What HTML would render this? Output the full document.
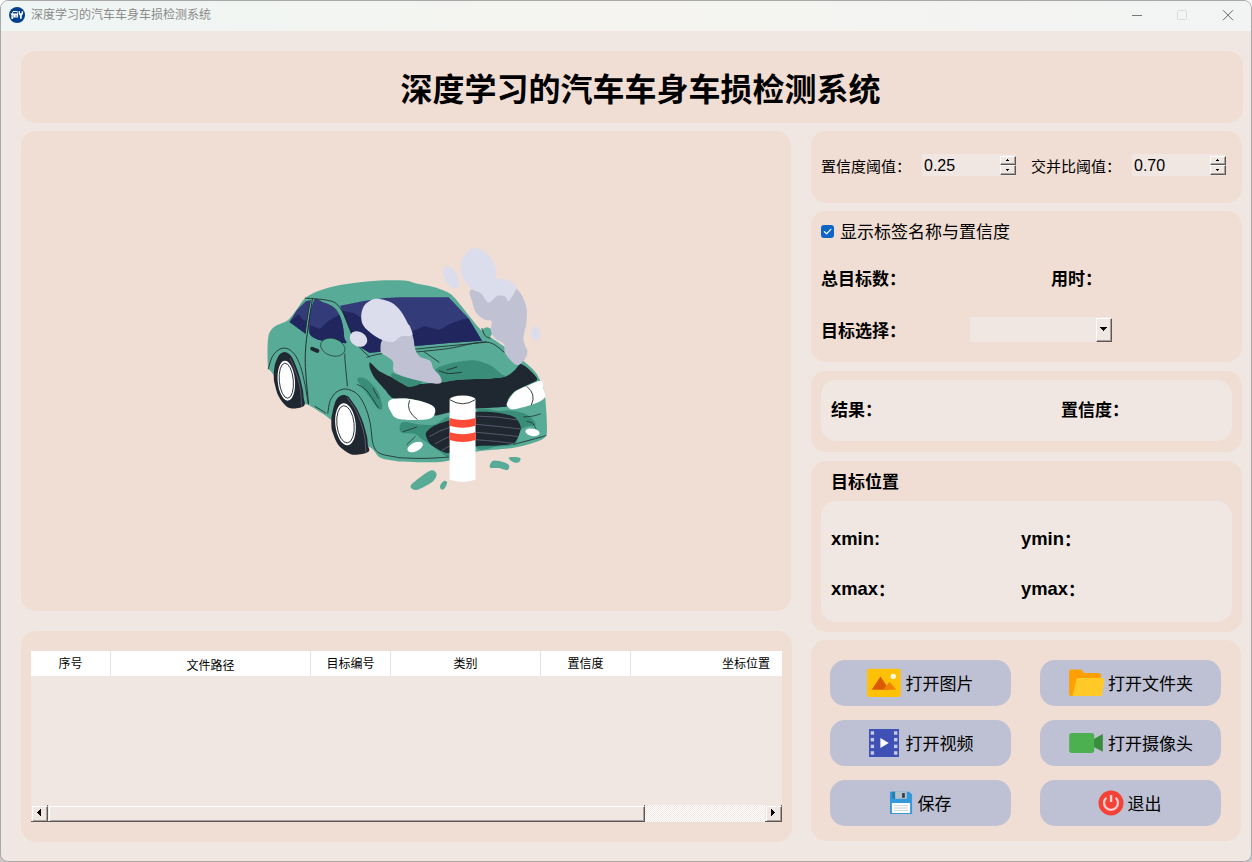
<!DOCTYPE html>
<html lang="zh-CN">
<head>
<meta charset="utf-8">
<title>深度学习的汽车车身车损检测系统</title>
<style>
*{box-sizing:border-box;margin:0;padding:0}
html,body{width:1252px;height:862px;overflow:hidden;background:linear-gradient(#fff 0,#fff 50%,#c8c8c8 50%)}
body{font-family:"Liberation Sans","Noto Sans CJK SC",sans-serif;color:#000;position:relative}
.abs{position:absolute}
#win{position:absolute;left:0;top:0;width:1252px;height:862px;background:#f0e7e2;border:1px solid #a9a9a9;border-radius:8px;overflow:hidden}
#tbar{position:absolute;left:0;top:0;width:1250px;height:30px;background:linear-gradient(90deg,#eef5f4 0%,#f2f5f2 25%,#f5f4f0 48%,#f3f4f2 75%,#f2f4f3 100%)}
#ttl{position:absolute;left:30px;top:0;height:30px;line-height:29px;font-size:12px;color:#8a8a8a;white-space:nowrap}
.panel{position:absolute;background:#f0ddd3;border-radius:15px}
.inner{position:absolute;background:#f0e7e2;border-radius:15px}
.lbl{position:absolute;white-space:nowrap;line-height:1}
.b{font-weight:bold}
.btn{position:absolute;width:181px;height:45.6px;background:#bec1d3;border-radius:15px}
.btn span{position:absolute;font-size:17px;line-height:1;white-space:nowrap}
.btn svg{position:absolute}
.th{position:absolute;top:0;height:25px;background:#fff;font-size:12px;line-height:27px;overflow:hidden;text-align:center;white-space:nowrap}

.spin{width:94px;height:22px;background:#f0e7e2}
.spin span{position:absolute;left:2px;top:4px;font-size:16px;line-height:1;letter-spacing:0}
.spin i,.combo i{position:absolute;border-top:1px solid #fff;border-left:1px solid #fff;border-right:1px solid #5c5855;border-bottom:1px solid #5c5855;background:#f0e7e2;box-shadow:inset -1px -1px 0 #a9a19d}
.spin i{left:78px;width:16px}
.spin i.u{top:2px;height:9px}.spin i.d{top:11px;height:10px}
.spin i b,.combo i b{position:absolute;background:#000;height:1px}
.combo{width:142px;height:25px;background:#f0e7e2}
.combo i{left:126px;top:1px;width:16px;height:24px}
.sb{position:absolute}
.sb i{position:absolute;border-top:1px solid #fff;border-left:1px solid #fff;border-right:1px solid #5c5855;border-bottom:1px solid #5c5855;background:#f0e7e2;box-shadow:inset -1px -1px 0 #a9a19d}
.sb b{position:absolute;background:#000}
.sb u{position:absolute;width:1px;height:1px;background:#5c5855}
.trk{position:absolute;background:repeating-conic-gradient(#fff 0 25%,#f0e7e2 0 50%);background-size:2px 2px}
.lt{font-size:18.4px}
.fc{position:relative;top:0.5px}
</style>
</head>
<body>
<div id="win">
  <div id="tbar"></div>
  <div id="ttl">深度学习的汽车车身车损检测系统</div>


  <svg class="abs" style="left:7px;top:5px" width="20" height="20" viewBox="7 5 20 20">
    <circle cx="16.05" cy="14" r="8.5" fill="#fff" opacity=".55"/>
    <circle cx="16.05" cy="14" r="8" fill="#003f8e"/>
    <g fill="#fff">
      <path d="M12.1 10.1 H16.3 L17.1 12.8 V16.5 H12.1 V17.9 H10.4 V13.4 L9.5 13 L9.8 12.3 L10.7 12.6Z"/>
      <path d="M17.5 10.4 L18.9 10.0 L19.1 12 Q19.85 12.8 20.6 12 L20.8 10.0 L22.2 10.4 Q22.5 13.2 20.75 14.6 L20.7 17.4 Q19.85 17.9 19.0 17.4 L18.95 14.6 Q17.2 13.2 17.5 10.4Z"/>
    </g>
    <path d="M12.3 10.95 H16.1 L16.5 12.5 H11.8Z" fill="#003f8e"/>
    <rect x="11.5" y="14.5" width="1.4" height="1.1" fill="#5a7db5"/><rect x="14.3" y="14.5" width="1.9" height="1.1" fill="#5a7db5"/>
  </svg>
  <div class="abs" style="left:1131px;top:14px;width:10px;height:1px;background:#787878"></div>
  <div class="abs" style="left:1176px;top:9px;width:10px;height:10px;border:1px solid #dadbda;border-radius:1.5px"></div>
  <svg class="abs" style="left:1220px;top:8px" width="14" height="14" viewBox="0 0 14 14"><path d="M2 1.2 L12 11.2 M12 1.2 L2 11.2" stroke="#686868" stroke-width="1" fill="none"/></svg>

  <!-- header -->
  <div class="panel" style="left:20px;top:50px;width:1221.5px;height:71.5px"></div>
  <div class="lbl b" id="h1" style="left:399.5px;top:72.5px;font-size:32px">深度学习的汽车车身车损检测系统</div>

  <!-- image panel -->
  <div class="panel" id="imgp" style="left:20px;top:130px;width:770px;height:480px"></div>

  <!--CAR--><svg class="abs" id="car" style="left:239px;top:229px" width="340" height="280" viewBox="240 230 340 280">
<ellipse cx="406" cy="424" rx="148" ry="70" fill="none" stroke="#fff" stroke-opacity=".12" stroke-width=".8" transform="rotate(4 406 424)"/>
<path d="M305.2 298.1 C308.7 295.1 313.3 293.1 318.2 291.1 C323.1 289.2 328.5 287.6 334.4 286.3 C340.4 284.9 346.3 284.0 353.9 283.0 C361.5 282.1 371.5 281.0 379.9 280.6 C388.3 280.2 398.2 280.1 404.2 280.6 C410.3 281.1 411.5 282.5 416.2 283.5 C420.9 284.5 427.3 285.4 432.5 286.8 C437.6 288.2 443.3 290.0 447.1 292.0 C450.9 293.9 451.7 294.7 455.2 298.5 C458.7 302.2 464.1 309.7 468.2 314.7 C472.3 319.7 475.8 324.7 479.6 328.5 C483.3 332.3 486.9 334.4 490.9 337.4 C495.0 340.4 498.5 342.4 503.9 346.3 C509.3 350.3 518.3 356.8 523.4 361.0 C528.5 365.2 532.0 368.3 534.8 371.5 C537.5 374.7 538.4 376.7 540.0 380.0 C541.5 383.2 543.2 386.1 544.2 390.8 C545.2 395.6 545.7 402.5 546.1 408.7 C546.6 414.9 547.0 423.6 546.9 428.2 C546.9 432.8 547.1 434.1 545.6 436.3 C544.2 438.5 543.3 439.3 538.0 441.2 C532.7 443.1 523.9 445.9 513.7 447.7 C503.4 449.4 487.1 449.6 476.3 451.7 C465.5 453.9 457.4 458.9 448.7 460.7 C440.0 462.4 432.5 462.2 424.4 462.3 C416.2 462.4 404.7 461.7 400.0 461.5 C395.3 461.3 399.5 461.7 396.1 461.0 C392.8 460.3 384.1 459.6 379.9 457.4 C375.7 455.2 376.1 451.5 370.9 447.8 C365.7 444.1 356.1 440.3 349.0 435.2 C341.8 430.1 334.6 422.3 327.8 417.2 C321.0 412.1 312.0 406.9 308.2 404.7 C304.5 402.5 308.8 405.6 305.1 403.9 C301.5 402.2 291.9 399.7 286.3 394.5 C280.8 389.3 274.9 376.9 271.9 372.6 C268.9 368.3 269.0 371.8 268.3 368.7 C267.6 365.5 267.6 358.9 267.5 353.7 C267.5 348.4 267.6 341.3 268.2 337.4 C268.8 333.5 269.7 332.1 271.1 330.1 C272.5 328.1 273.9 326.9 276.8 325.2 C279.6 323.5 284.8 322.6 288.2 319.9 C291.5 317.2 294.2 312.6 297.1 309.0 C299.9 305.4 301.7 301.1 305.2 298.1Z" fill="#57ab97" />
<path d="M284.4 351.9 C282.9 351.9 281.3 352.9 280.1 354.1 C278.8 355.3 277.8 357.2 276.9 359.3 C276.0 361.3 275.1 363.6 274.6 366.3 C274.1 369.1 273.8 372.8 273.8 375.7 C273.8 378.6 273.8 380.2 274.6 383.6 C275.4 386.9 276.5 392.3 278.5 396.1 C280.5 399.9 283.7 404.2 286.3 406.3 C288.9 408.3 291.2 408.7 294.2 408.6 C297.2 408.5 302.8 407.3 304.3 405.5 C305.9 403.7 303.8 400.3 303.6 397.6 C303.3 395.0 303.6 393.7 302.8 389.8 C302.0 385.9 300.4 379.1 298.9 374.2 C297.3 369.2 295.0 363.4 293.4 360.1 C291.8 356.7 290.6 355.5 289.1 354.1 C287.7 352.7 286.0 351.9 284.4 351.9Z" fill="#1f2730" />
<path d="M343.0 395.0 C341.5 395.2 339.4 396.2 338.0 397.6 C336.6 399.1 335.6 400.8 334.6 403.9 C333.5 407.0 332.3 412.8 331.7 416.4 C331.2 420.1 331.3 423.2 331.4 425.8 C331.6 428.4 331.4 429.0 332.5 432.1 C333.6 435.2 335.5 441.2 338.0 444.6 C340.5 448.0 344.5 450.8 347.4 452.5 C350.3 454.2 351.7 454.9 355.2 454.8 C358.8 454.7 366.5 453.4 368.5 451.7 C370.6 450.0 368.0 447.1 367.8 444.6 C367.5 442.2 367.8 440.5 367.0 436.8 C366.2 433.1 364.8 427.4 363.1 422.7 C361.4 418.0 358.9 412.6 356.8 408.6 C354.7 404.6 351.8 401.0 350.2 398.9 C348.6 396.8 348.3 396.7 347.1 396.1 C345.9 395.4 344.5 394.7 343.0 395.0Z" fill="#1f2730" />
<path d="M290.2 358.5 C291.3 361.1 294.8 368.9 296.5 374.2 C298.2 379.4 299.6 384.5 300.4 389.8 C301.3 395.1 301.3 403.1 301.5 405.8" fill="none" stroke="#6b6585" stroke-width="0.75" stroke-linecap="round"/>
<path d="M347.4 398.0 C348.7 399.9 352.9 405.1 355.2 409.4 C357.5 413.6 359.6 418.9 361.2 423.5 C362.8 428.1 363.8 432.0 364.6 436.8 C365.4 441.6 365.7 449.6 365.9 452.1" fill="none" stroke="#6b6585" stroke-width="0.75" stroke-linecap="round"/>
<g transform="rotate(-5 286.3 380.7)"><ellipse cx="286.3" cy="380.7" rx="8.6" ry="20" fill="#fff"/><ellipse cx="286.3" cy="380.7" rx="7.0" ry="17.6" fill="none" stroke="#1f2730" stroke-width="0.9"/></g>
<g transform="rotate(-6 345.5 424.3)"><ellipse cx="345.5" cy="424.3" rx="10.2" ry="21.1" fill="#fff"/><ellipse cx="345.5" cy="424.3" rx="8.6" ry="18.700000000000003" fill="none" stroke="#1f2730" stroke-width="0.9"/></g>
<path d="M306.0 300.9 L310.4 300.4 L305.2 333.4 L289.5 322.0 L297.1 309.8Z" fill="#343b79" />
<path d="M289.5 322.0 L298.7 313.9 L302.8 319.6 L306.8 321.2 L305.2 333.4Z" fill="#21275e" />
<clipPath id="csw"><path d="M313.6 300.9 C315.9 295.5 320.7 301.6 323.9 302.5 C327.1 303.5 330.4 304.8 332.8 306.6 C335.2 308.3 336.9 310.1 338.5 313.1 C340.1 316.0 341.6 320.4 342.5 324.4 C343.5 328.5 344.0 334.3 344.2 337.4 C344.4 340.5 349.5 343.5 343.8 343.1 C338.2 342.7 315.4 342.0 310.4 335.0 C305.4 327.9 311.4 306.3 313.6 300.9Z" fill="#000" /></clipPath>
<path d="M313.6 300.9 C315.9 295.5 320.7 301.6 323.9 302.5 C327.1 303.5 330.4 304.8 332.8 306.6 C335.2 308.3 336.9 310.1 338.5 313.1 C340.1 316.0 341.6 320.4 342.5 324.4 C343.5 328.5 344.0 334.3 344.2 337.4 C344.4 340.5 349.5 343.5 343.8 343.1 C338.2 342.7 315.4 342.0 310.4 335.0 C305.4 327.9 311.4 306.3 313.6 300.9Z" fill="#343b79" />
<g clip-path="url(#csw)"><path d="M310.1 325.2 L319.8 329.0 L327.9 321.2 L336.1 316.3 L340.9 313.9 L347.4 321.2 L347.4 353.7 L306.8 353.7Z" fill="#21275e" /></g>
<clipPath id="cws"><path d="M340.1 305.8 L363.7 300.9 L384.8 298.1 L400.0 297.2 L448.7 297.2 L468.2 317.9 L482.0 340.7 L448.7 343.1 L415.4 345.9 L396.1 350.4 L369.3 352.8 L355.5 343.9 L347.4 324.4Z" fill="#000" /></clipPath>
<path d="M340.1 305.8 L363.7 300.9 L384.8 298.1 L400.0 297.2 L448.7 297.2 L468.2 317.9 L482.0 340.7 L448.7 343.1 L415.4 345.9 L396.1 350.4 L369.3 352.8 L355.5 343.9 L347.4 324.4Z" fill="#343b79" />
<g clip-path="url(#cws)"><path d="M340.9 310.6 L353.9 313.1 L363.7 319.6 L390.3 332.5 L413.0 330.9 L424.4 326.1 L439.0 330.1 L448.7 324.4 L461.7 319.6 L471.4 318.3 L490.9 353.7 L347.4 363.4Z" fill="#21275e" /></g>
<path d="M370.0 362.6 C371.1 362.9 376.3 369.1 379.0 370.9 C381.8 372.7 389.2 376.0 392.6 377.7 C396.1 379.4 404.4 384.5 407.7 385.2 C410.9 386.0 415.8 384.4 419.8 384.0 C423.7 383.7 436.0 382.8 440.9 382.2 C445.7 381.7 454.5 380.0 460.5 379.5 C466.4 379.0 485.2 378.8 490.6 378.4 C496.0 378.1 502.8 377.6 505.7 376.6 C508.6 375.6 512.9 371.7 514.7 370.2 C516.5 368.7 519.0 364.1 520.8 364.1 C522.6 364.1 527.8 368.3 529.8 370.2 C531.8 372.0 537.7 377.7 537.3 379.5 C537.0 381.3 529.5 383.8 526.8 385.2 C524.1 386.6 517.0 389.5 514.7 391.3 C512.5 393.0 508.8 397.7 507.9 399.6 C507.1 401.4 509.6 405.3 507.5 406.3 C505.4 407.3 494.4 407.6 490.6 407.8 C486.9 408.1 481.2 408.1 476.3 408.6 C471.4 409.1 454.6 411.6 449.6 412.4 C444.6 413.2 436.7 415.9 434.8 415.4 C433.0 414.8 435.5 409.5 434.1 407.8 C432.6 406.2 425.9 402.9 422.8 401.8 C419.6 400.7 411.3 398.9 407.7 398.5 C404.1 398.0 395.3 399.1 392.6 398.0 C389.9 397.0 387.2 392.2 385.1 389.8 C382.9 387.3 376.3 380.2 374.5 377.7 C372.7 375.2 370.5 370.5 370.0 368.6 C369.5 366.8 368.9 362.3 370.0 362.6Z" fill="#1f2730" />
<path d="M436.3 368.6 C439.2 366.4 447.9 364.0 454.4 362.6 C461.0 361.2 469.5 359.9 475.5 360.4 C481.6 360.9 486.3 363.4 490.6 365.6 C494.9 367.9 498.6 372.1 501.2 373.9 C503.7 375.8 507.4 375.9 505.7 376.6 C503.9 377.4 498.1 378.0 490.6 378.4 C483.1 378.9 468.7 378.9 460.5 379.5 C452.2 380.1 444.8 382.8 440.9 382.2 C437.0 381.7 437.8 378.4 437.1 376.2 C436.3 373.9 433.4 370.9 436.3 368.6Z" fill="#3a8d79" />
<path d="M392.6 373.2 C395.1 373.2 403.2 376.6 407.7 377.7 C412.2 378.7 417.4 378.6 419.8 379.5 C422.1 380.4 423.6 381.7 422.0 383.0 C420.4 384.2 413.2 386.9 410.0 387.0 C406.7 387.2 405.3 385.3 402.4 383.7 C399.5 382.2 394.2 379.4 392.6 377.7 C391.0 375.9 390.1 373.2 392.6 373.2Z" fill="#3a8d79" />
<path d="M358.0 377.9 C359.3 377.3 363.5 377.0 366.9 379.5 C370.3 381.9 375.7 387.9 378.3 392.5 C380.8 397.1 382.3 404.4 382.3 407.1 C382.3 409.8 380.6 410.6 378.3 408.7 C376.0 406.8 371.8 400.0 368.5 395.7 C365.3 391.4 360.5 385.7 358.8 382.7 C357.0 379.8 356.6 378.4 358.0 377.9Z" fill="#3a8d79" />
<path d="M388.1 403.3 C388.5 401.4 389.3 399.9 392.6 399.1 C395.9 398.3 402.7 398.3 407.7 398.8 C412.7 399.2 418.5 400.6 422.8 401.8 C427.0 403.1 431.3 404.6 433.3 406.3 C435.4 408.1 435.6 410.4 435.1 412.4 C434.6 414.4 433.6 417.1 430.3 418.4 C427.0 419.7 420.8 419.9 415.2 419.9 C409.7 419.9 401.3 419.9 397.1 418.4 C393.0 416.9 391.9 413.4 390.4 410.9 C388.8 408.3 387.7 405.3 388.1 403.3Z" fill="#fff" />
<path d="M507.2 402.6 C508.4 400.2 511.5 394.8 514.7 392.0 C518.0 389.2 522.4 387.9 526.8 386.0 C531.2 384.1 538.4 380.3 541.1 380.7 C543.9 381.1 542.7 385.5 543.4 388.2 C544.0 391.0 546.1 394.8 544.9 397.3 C543.6 399.8 539.9 401.6 535.8 403.3 C531.8 405.1 524.8 406.8 520.8 407.8 C516.7 408.8 513.9 409.6 511.7 409.4 C509.5 409.1 508.2 407.5 507.5 406.3 C506.7 405.2 506.0 405.0 507.2 402.6Z" fill="#fff" />
<path d="M409.5 400.3 Q405.4 410.9 417.5 419.6" fill="none" stroke="#1d2b2b" stroke-width="0.9"/>
<path d="M526.8 386.4 Q536.6 394.3 531.3 405.1" fill="none" stroke="#1d2b2b" stroke-width="0.9"/>
<path d="M402.4 422.2 C405.6 420.9 414.3 424.0 419.8 424.4 C425.2 424.8 429.9 425.4 434.8 424.4 C439.8 423.4 447.1 413.4 449.6 418.4 C452.1 423.4 451.1 448.9 449.6 454.6 C448.1 460.2 444.2 454.1 440.9 452.3 C437.5 450.6 432.8 446.3 429.6 444.0 C426.3 441.8 423.6 440.4 421.3 438.7 C418.9 437.1 418.6 435.3 415.2 434.2 C411.8 433.1 403.0 434.3 400.9 432.3 C398.8 430.3 399.3 423.5 402.4 422.2Z" fill="#3a8d79" />
<path d="M476.3 410.9 C479.9 404.8 491.7 410.9 498.1 410.9 C504.6 410.9 509.7 410.1 514.7 410.9 C519.8 411.6 524.8 413.1 528.3 415.4 C531.8 417.6 536.1 422.5 535.8 424.4 C535.6 426.3 529.3 425.7 526.8 426.7 C524.3 427.7 522.8 427.6 520.8 430.5 C518.8 433.3 518.5 441.4 514.7 444.0 C511.0 446.7 504.6 445.7 498.1 446.3 C491.7 446.8 479.9 453.2 476.3 447.3 C472.6 441.4 472.6 416.9 476.3 410.9Z" fill="#3a8d79" />
<path d="M425.8 433.5 C426.1 431.3 430.5 427.8 433.3 426.2 C436.2 424.6 444.4 421.9 449.6 420.2 C454.8 418.5 470.5 413.0 476.3 412.1 C482.1 411.2 493.5 412.1 498.1 412.7 C502.8 413.3 512.0 415.4 514.7 417.2 C517.4 419.0 520.8 424.4 520.8 427.4 C520.8 430.5 517.4 440.3 514.7 442.5 C512.0 444.7 502.8 445.1 498.1 445.5 C493.5 446.0 482.1 445.4 476.3 446.3 C470.5 447.2 453.7 452.1 449.6 452.8 C445.5 453.4 444.7 452.6 442.4 451.6 C440.0 450.5 432.3 446.2 430.3 444.0 C428.3 441.9 425.4 435.6 425.8 433.5Z" fill="#1f2730" />
<path d="M429.6 436.5 Q439.4 430.5 449.6 427.4" fill="none" stroke="#7d7b93" stroke-width="0.6"/>
<path d="M434.8 444.0 Q442.4 439.5 449.6 436.5" fill="none" stroke="#7d7b93" stroke-width="0.6"/>
<path d="M441.6 450.8 Q445.4 447.8 449.6 446.3" fill="none" stroke="#7d7b93" stroke-width="0.6"/>
<path d="M476.3 416.1 Q498.1 416.1 517.0 419.9" fill="none" stroke="#7d7b93" stroke-width="0.6"/>
<path d="M476.3 424.4 Q498.1 426.2 520.0 428.9" fill="none" stroke="#7d7b93" stroke-width="0.6"/>
<path d="M476.3 432.3 Q498.1 434.2 518.5 436.5" fill="none" stroke="#7d7b93" stroke-width="0.6"/>
<path d="M476.3 439.8 Q498.1 441.3 513.2 443.3" fill="none" stroke="#7d7b93" stroke-width="0.6"/>
<ellipse cx="415.2" cy="447.0" rx="8.3" ry="4.3" fill="#fff" transform="rotate(-25 415.2 447.0)"/>
<ellipse cx="532.5" cy="432.3" rx="7.2" ry="3.7" fill="#fff" transform="rotate(10 532.5 432.3)"/>
<ellipse cx="332.8" cy="347.2" rx="12.6" ry="8.6" fill="#57ab97" stroke="#1d2b2b" stroke-width="0.6" transform="rotate(18 332.8 347.2)"/>
<circle cx="486.9" cy="332.5" r="5.2" fill="#57ab97"/>
<rect x="310.0" y="347.8" width="9.6" height="4" rx="2" fill="#1f2730" transform="rotate(22 314.8 349.8)"/>
<path d="M312.5 298.5 C311.8 302.8 309.5 316.9 308.5 324.4 C307.4 332.0 306.6 338.0 306.0 343.9 C305.5 349.8 305.2 354.6 305.2 360.0 C305.2 365.4 305.5 368.9 306.0 376.2 C306.6 383.5 308.0 399.2 308.5 403.8" fill="none" stroke="#1d2b2b" stroke-width="0.9500000000000001" stroke-linecap="round"/>
<path d="M310.4 300.4 C309.9 303.3 308.0 312.4 307.2 317.9 C306.3 323.4 305.5 330.8 305.2 333.4" fill="none" stroke="#1d2b2b" stroke-width="0.75" stroke-linecap="round"/>
<path d="M305.2 298.1 C308.7 298.5 320.9 298.9 326.3 300.1 C331.7 301.2 334.2 301.4 337.7 304.9 C341.2 308.5 344.2 314.7 347.4 321.2 C350.7 327.7 353.5 338.0 357.2 343.9 C360.8 349.9 367.3 354.7 369.3 356.9" fill="none" stroke="#1d2b2b" stroke-width="0.85" stroke-linecap="round"/>
<path d="M345.0 353.7 C345.0 354.7 344.6 354.6 345.0 360.0 C345.4 365.4 347.0 381.6 347.4 386.0" fill="none" stroke="#1d2b2b" stroke-width="0.85" stroke-linecap="round"/>
<path d="M314.9 406.3 C316.7 407.4 323.7 411.7 325.5 412.8" fill="none" stroke="#1d2b2b" stroke-width="0.85" stroke-linecap="round"/>
<path d="M366.9 357.2 C369.1 356.7 371.7 355.3 379.9 354.0 C388.1 352.6 404.8 350.5 416.2 349.1 C427.7 347.8 437.7 346.9 448.7 345.9 C459.7 344.8 475.8 343.3 482.0 342.6 C488.2 342.0 485.4 342.1 486.1 342.0" fill="none" stroke="#1d2b2b" stroke-width="0.85" stroke-linecap="round"/>
<path d="M416.2 352.0 C421.6 351.4 437.1 350.1 448.7 348.5 C460.3 346.8 476.9 341.4 486.1 342.0 C495.3 342.6 500.9 350.4 503.9 352.0" fill="none" stroke="#1d2b2b" stroke-width="0.85" stroke-linecap="round"/>
<path d="M482.0 328.5 C482.5 329.7 483.9 334.2 485.2 335.8 C486.6 337.4 489.3 337.8 490.1 338.2" fill="none" stroke="#1d2b2b" stroke-width="0.85" stroke-linecap="round"/>
<path d="M424.4 352.0 C426.8 353.7 436.5 360.4 439.0 362.1" fill="none" stroke="#1d2b2b" stroke-width="0.85" stroke-linecap="round"/>
<path d="M447.1 369.9 C448.7 369.4 455.2 367.5 456.8 367.0" fill="none" stroke="#1d2b2b" stroke-width="0.85" stroke-linecap="round"/>
<path d="M439.0 370.7 C440.6 371.2 445.0 373.2 448.7 373.5 C452.4 373.7 459.3 372.5 461.4 372.3" fill="none" stroke="#1d2b2b" stroke-width="0.85" stroke-linecap="round"/>
<path d="M268.3 368.7 C269.0 366.7 270.5 360.1 272.2 356.9 C273.9 353.8 276.1 351.3 278.5 349.9 C280.8 348.4 283.7 347.7 286.3 348.3 C288.9 349.0 291.8 350.8 294.2 353.8 C296.5 356.8 298.6 361.1 300.4 366.3 C302.2 371.5 303.8 378.9 305.1 385.1 C306.4 391.4 307.7 400.8 308.2 403.9" fill="none" stroke="#1d2b2b" stroke-width="0.85" stroke-linecap="round"/>
<path d="M327.8 413.3 C328.2 411.2 328.7 404.3 330.2 400.8 C331.6 397.3 333.8 394.1 336.4 392.2 C339.1 390.2 342.4 388.8 345.8 389.0 C349.2 389.3 353.7 391.0 356.8 393.7 C359.9 396.5 362.4 400.6 364.6 405.5 C366.9 410.3 368.7 416.2 370.1 422.7 C371.5 429.2 371.6 439.5 373.2 444.6 C374.9 449.7 376.1 451.3 379.9 453.4 C383.7 455.4 392.8 456.4 396.1 457.1 C399.5 457.8 395.3 457.5 400.0 457.7 C404.7 458.0 416.2 458.5 424.4 458.4 C432.5 458.3 444.7 457.3 448.7 457.1" fill="none" stroke="#1d2b2b" stroke-width="0.85" stroke-linecap="round"/>
<path d="M513.7 444.4 C517.7 443.3 532.6 439.4 538.0 437.9 C543.4 436.4 544.8 435.9 546.1 435.5" fill="none" stroke="#1d2b2b" stroke-width="0.85" stroke-linecap="round"/>
<path d="M357.2 384.4 C358.8 385.4 363.4 386.9 366.9 390.8 C370.4 394.8 376.4 405.1 378.3 407.9" fill="none" stroke="#1d2b2b" stroke-width="0.75" stroke-linecap="round"/>
<path d="M373.1 388.4 C373.9 390.0 377.4 396.5 378.3 398.2" fill="none" stroke="#1d2b2b" stroke-width="0.75" stroke-linecap="round"/>
<path d="M403.2 431.7 C405.4 430.9 414.5 427.9 416.7 427.1" fill="none" stroke="#1d2b2b" stroke-width="0.75" stroke-linecap="round"/>
<path d="M406.9 444.8 C408.3 443.4 413.8 437.9 415.2 436.5" fill="none" stroke="#1d2b2b" stroke-width="0.75" stroke-linecap="round"/>
<path d="M523.8 416.9 C525.3 416.8 530.1 416.6 532.8 416.1 C535.6 415.6 539.1 414.2 540.4 413.9" fill="none" stroke="#1d2b2b" stroke-width="0.75" stroke-linecap="round"/>
<path d="M526.8 421.4 C527.7 421.7 530.6 421.8 532.1 422.9 C533.6 424.0 535.2 427.3 535.8 428.2" fill="none" stroke="#1d2b2b" stroke-width="0.75" stroke-linecap="round"/>
<path d="M449.6 399.6 L449.6 479.8 Q462.6 484.0 475.5 479.8 L475.5 399.6Z" fill="#fff"/>
<ellipse cx="462.6" cy="399.6" rx="13.0" ry="4.2" fill="#fff"/>
<path d="M449.6 399.6 Q462.6 408.0 475.5 399.6" fill="none" stroke="#1d2b2b" stroke-width="0.9"/>
<path d="M449.6 418.1 Q462.6 422.1 475.5 418.1 L475.5 425.7 Q462.6 429.7 449.6 425.7Z" fill="#ff4a36"/>
<path d="M449.6 432.3 Q462.6 436.3 475.5 432.3 L475.5 439.9 Q462.6 443.9 449.6 439.9Z" fill="#ff4a36"/>
<path d="M410.6 485.8 C411.4 483.8 416.1 480.3 419.5 477.7 C422.9 475.1 428.0 471.1 430.8 470.4 C433.7 469.7 436.1 471.9 436.5 473.7 C436.9 475.4 435.9 478.5 433.3 481.0 C430.7 483.4 424.2 486.8 421.1 488.3 C418.0 489.8 416.4 490.3 414.6 489.9 C412.9 489.5 409.7 487.9 410.6 485.8Z" fill="#57ab97" />
<path d="M440.1 485.8 C440.5 484.4 442.7 481.5 443.8 481.0 C445.0 480.4 447.0 481.4 447.1 482.6 C447.2 483.8 445.6 487.1 444.7 488.3 C443.7 489.4 442.2 490.0 441.4 489.6 C440.6 489.2 439.7 487.3 440.1 485.8Z" fill="#57ab97" />
<path d="M489.8 465.5 C490.2 464.3 491.0 461.2 493.4 460.7 C495.7 460.1 501.3 461.5 503.9 462.3 C506.5 463.1 508.6 464.2 509.1 465.5 C509.6 466.8 508.8 469.7 507.2 470.1 C505.5 470.5 501.7 468.3 499.0 468.0 C496.3 467.6 492.5 468.4 490.9 468.0 C489.4 467.6 489.4 466.8 489.8 465.5Z" fill="#57ab97" />
<path d="M509.1 457.4 C510.5 456.8 518.6 457.0 520.1 457.9 C521.7 458.8 519.6 462.0 518.2 462.6 C516.8 463.2 513.5 462.3 512.0 461.5 C510.5 460.6 507.8 458.0 509.1 457.4Z" fill="#57ab97" />
<path d="M382.3 339.9 C379.8 343.4 380.7 349.7 380.7 352.0 C380.7 354.3 380.1 352.1 382.1 353.6 C384.0 355.1 390.6 358.1 392.6 361.1 C394.6 364.1 391.6 368.9 394.1 371.7 C396.6 374.4 401.7 375.8 407.7 377.7 C413.7 379.6 424.8 382.1 430.3 383.0 C435.8 383.8 439.2 384.1 440.9 383.0 C442.5 381.8 441.4 378.6 440.1 376.2 C438.8 373.8 435.0 371.2 433.3 368.6 C431.7 366.1 432.6 363.1 430.3 361.1 C428.0 359.1 422.3 358.6 419.8 356.6 C417.2 354.6 416.2 351.8 415.2 349.0 C414.2 346.3 414.2 342.3 413.7 340.0 C413.2 337.7 413.3 337.6 412.4 335.0 C411.5 332.4 411.0 325.1 408.3 324.4 C405.6 323.8 400.5 328.4 396.1 330.9 C391.8 333.5 384.9 336.3 382.3 339.9Z" fill="#c0c2d3" />
<path d="M376.6 298.8 C372.9 298.6 370.7 300.4 368.5 301.7 C366.4 303.0 364.9 304.1 363.7 306.6 C362.4 309.0 361.2 313.1 361.2 316.3 C361.2 319.6 361.6 322.9 363.7 326.1 C365.7 329.2 370.3 332.7 373.4 335.0 C376.5 337.3 379.1 338.7 382.3 339.9 C385.6 341.0 389.8 342.5 392.9 342.0 C396.0 341.4 397.8 337.8 401.0 336.6 C404.2 335.4 411.1 337.0 412.4 335.0 C413.6 333.0 410.2 328.4 408.3 324.4 C406.4 320.5 403.8 315.1 401.0 311.4 C398.2 307.8 395.3 304.6 391.3 302.5 C387.2 300.4 380.4 298.9 376.6 298.8Z" fill="#dcddec" />
<ellipse cx="358.5" cy="339.0" rx="9.2" ry="7.3" fill="#dcddec" transform="rotate(30 358.5 339.0)"/>
<path d="M471.4 289.5 C467.2 291.7 471.4 297.8 472.3 301.7 C473.1 305.6 474.3 310.1 476.3 313.1 C478.3 316.0 481.9 318.2 484.4 319.6 C487.0 320.9 490.7 319.3 491.7 321.2 C492.8 323.1 490.2 327.9 490.9 330.9 C491.6 333.9 493.6 336.9 495.8 339.0 C498.0 341.2 502.4 341.7 503.9 343.9 C505.4 346.1 503.6 349.3 504.7 352.0 C505.8 354.7 508.4 358.0 510.4 360.1 C512.4 362.3 514.7 364.9 516.9 365.0 C519.1 365.2 521.6 363.1 523.4 361.0 C525.2 358.8 527.5 355.7 527.5 352.0 C527.5 348.4 523.5 344.2 523.4 339.0 C523.3 333.9 526.2 326.9 526.6 321.2 C527.0 315.5 527.6 310.4 525.8 304.9 C524.1 299.5 520.8 291.4 516.1 288.7 C511.4 286.0 504.9 288.6 497.4 288.7 C490.0 288.8 475.6 287.4 471.4 289.5Z" fill="#c0c2d3" />
<path d="M473.1 248.1 C470.1 248.8 467.0 251.9 464.9 254.6 C462.9 257.3 461.3 260.6 460.9 264.4 C460.5 268.1 460.8 273.3 462.5 277.3 C464.3 281.4 468.3 286.0 471.4 288.7 C474.6 291.4 478.3 291.3 481.2 293.6 C484.0 295.9 485.8 302.1 488.5 302.5 C491.2 302.9 494.6 297.0 497.4 296.0 C500.3 295.1 503.6 296.0 505.5 296.8 C507.4 297.6 507.0 302.2 508.8 300.9 C510.5 299.5 515.3 291.6 516.1 288.7 C516.9 285.9 515.4 285.5 513.7 283.8 C511.9 282.2 508.4 279.9 505.5 279.0 C502.7 278.0 498.2 279.8 496.6 278.2 C495.0 276.5 496.7 272.6 495.8 269.2 C494.8 265.8 493.1 261.0 490.9 257.9 C488.8 254.7 485.8 252.2 482.8 250.6 C479.8 248.9 476.0 247.4 473.1 248.1Z" fill="#dcddec" />
<ellipse cx="451.1" cy="277.3" rx="6.5" ry="12.2" fill="#dcddec" transform="rotate(-28 451.1 277.3)"/>
<ellipse cx="535.7" cy="333.4" rx="4.9" ry="6.8" fill="#dcddec" transform="rotate(-10 535.7 333.4)"/>
</svg><!--/CAR-->

  <!-- table panel -->
  <div class="panel" id="tblp" style="left:20px;top:630px;width:771px;height:211px"></div>

  <!-- right panels -->
  <div class="panel" style="left:810px;top:130px;width:431.3px;height:71.5px"></div>
  <div class="panel" style="left:810px;top:210px;width:431.3px;height:150.5px"></div>
  <div class="panel" style="left:810px;top:370px;width:431.3px;height:81px"></div>
  <div class="inner" style="left:820px;top:379px;width:411px;height:61px"></div>
  <div class="panel" style="left:810px;top:460px;width:431.3px;height:171px"></div>
  <div class="inner" style="left:820px;top:500px;width:411px;height:121px"></div>
  <div class="panel" style="left:810px;top:639px;width:430px;height:201px"></div>

  <!-- P1: thresholds -->
  <div class="lbl" style="left:820px;top:158px;font-size:15px">置信度阈值：</div>
  <div class="abs spin" style="left:921px;top:153px"><span>0.25</span><i class="u"><b style="left:6px;top:2px;width:1px"></b><b style="left:5px;top:3px;width:3px"></b></i><i class="d"><b style="left:5px;top:3px;width:3px"></b><b style="left:6px;top:4px;width:1px"></b></i></div>
  <div class="lbl" style="left:1030px;top:158px;font-size:15px">交并比阈值：</div>
  <div class="abs spin" style="left:1131px;top:153px"><span>0.70</span><i class="u"><b style="left:6px;top:2px;width:1px"></b><b style="left:5px;top:3px;width:3px"></b></i><i class="d"><b style="left:5px;top:3px;width:3px"></b><b style="left:6px;top:4px;width:1px"></b></i></div>

  <!-- P2 -->
  <div class="abs" style="left:820px;top:224px;width:13px;height:13px;background:#0f65c6;border-radius:3px"><svg width="13" height="13" viewBox="0 0 13 13" style="display:block"><path d="M3.3 6.6 L5.6 8.8 L9.8 4.3" fill="none" stroke="#fff" stroke-width="1.2" stroke-linecap="round" stroke-linejoin="round"/></svg></div>
  <div class="lbl" style="left:839px;top:222.6px;font-size:17px">显示标签名称与置信度</div>
  <div class="lbl b" style="left:820px;top:270px;font-size:17px">总目标数：</div>
  <div class="lbl b" style="left:1050px;top:270px;font-size:17px">用时：</div>
  <div class="lbl b" style="left:820px;top:322px;font-size:17px">目标选择：</div>
  <div class="abs combo" style="left:969px;top:316px"><i><b style="left:3px;top:8px;width:7px"></b><b style="left:4px;top:9px;width:5px"></b><b style="left:5px;top:10px;width:3px"></b><b style="left:6px;top:11px;width:1px"></b></i></div>

  <!-- P3 -->
  <div class="lbl b" style="left:830px;top:401px;font-size:17px">结果：</div>
  <div class="lbl b" style="left:1060px;top:401px;font-size:17px">置信度：</div>

  <!-- P4 -->
  <div class="lbl b" style="left:830px;top:473px;font-size:17px">目标位置<span style="color:#f3d6c0;font-weight:normal">:</span></div>
  <div class="lbl b" style="left:830px;top:529px;font-size:17px"><span class="lt">xmin:</span></div>
  <div class="lbl b" style="left:1020px;top:529px;font-size:17px"><span class="lt">ymin</span><span class="fc">：</span></div>
  <div class="lbl b" style="left:830px;top:579px;font-size:17px"><span class="lt">xmax</span><span class="fc">：</span></div>
  <div class="lbl b" style="left:1020px;top:579px;font-size:17px"><span class="lt">ymax</span><span class="fc">：</span></div>

  <!-- P5 buttons -->
  <div class="btn" id="b1" style="left:829px;top:659px"><svg width="181" height="46" viewBox="0 0 181 46" style="left:0;top:0"><rect x="37.07" y="8.8" width="33.73" height="28.3" rx="2.4" fill="#ffc107"/><path d="M41.7 29.8 L50.5 16.4 L59.3 29.8Z" fill="#d95a00"/><path d="M53.2 29.8 L59.7 21.7 L66.2 29.8Z" fill="#f08200"/><circle cx="63.3" cy="16.4" r="2.6" fill="#fff8e1"/></svg><span style="left:75.5px;top:16px">打开图片</span></div>
  <div class="btn" id="b2" style="left:1039px;top:659px"><svg width="181" height="46" viewBox="0 0 181 46" style="left:0;top:0"><path d="M29.07 11.6 Q29.07 9.55 31.1 9.55 L40.6 9.55 Q41.4 9.55 42 10.2 L44.2 13 L59 13 Q61 13 61 15 L61 34 Q61 36.1 59 36.1 L31.1 36.1 Q29.07 36.1 29.07 34Z" fill="#ffa000"/><path d="M36.3 19.6 Q36.6 18.1 38.1 18.1 L62.6 18.1 Q64.7 18.1 64.3 20 L62.2 34.6 Q62 36.1 60.4 36.1 L32.5 36.1Z" fill="#ffca28"/></svg><span style="left:68px;top:16px">打开文件夹</span></div>
  <div class="btn" id="b3" style="left:829px;top:719px"><svg width="181" height="46" viewBox="0 0 181 46" style="left:0;top:0"><rect x="39" y="9" width="30" height="28" fill="#3f51b5"/><rect x="40.7" y="11.26" width="3.4" height="3.45" fill="#c5cae9"/><rect x="40.7" y="17.98" width="3.4" height="3.45" fill="#c5cae9"/><rect x="40.7" y="24.66" width="3.4" height="3.45" fill="#c5cae9"/><rect x="40.7" y="31.24" width="3.4" height="3.45" fill="#c5cae9"/><rect x="64.0" y="11.26" width="3.4" height="3.45" fill="#c5cae9"/><rect x="64.0" y="17.98" width="3.4" height="3.45" fill="#c5cae9"/><rect x="64.0" y="24.66" width="3.4" height="3.45" fill="#c5cae9"/><rect x="64.0" y="31.24" width="3.4" height="3.45" fill="#c5cae9"/><path d="M50.37 17.98 L58.75 22.95 L50.37 28.07Z" fill="#fff"/></svg><span style="left:75.5px;top:16px">打开视频</span></div>
  <div class="btn" id="b4" style="left:1039px;top:719px"><svg width="181" height="46" viewBox="0 0 181 46" style="left:0;top:0"><path d="M62.8 13.9 L62.8 31.8 L52 25.9 L52 19.9Z" fill="#388e3c"/><rect x="29.2" y="12.96" width="25" height="20" rx="2.6" fill="#4caf50"/></svg><span style="left:68px;top:16px">打开摄像头</span></div>
  <div class="btn" id="b5" style="left:829px;top:779px"><svg width="181" height="46" viewBox="0 0 181 46" style="left:0;top:0"><path d="M59.95 11.7 L79.2 11.7 L82.07 14.5 L82.07 34.03 L59.95 34.03Z" fill="#3498db"/><rect x="61.98" y="11.7" width="3.3" height="7.1" fill="#2980b9"/><rect x="65.2" y="11.7" width="11.6" height="7.1" fill="#b4c0c6"/><rect x="72.1" y="13.1" width="2.7" height="4.7" fill="#2c3e50"/><rect x="61.9" y="23.07" width="18.2" height="9.95" fill="#fff"/><rect x="64" y="24.9" width="14" height="1.2" fill="#cfd8dc"/><rect x="64" y="27.1" width="14" height="1.85" fill="#dfe5e8"/><rect x="64" y="29.97" width="14" height="1.05" fill="#cfd8dc"/></svg><span style="left:87.5px;top:16px">保存</span></div>
  <div class="btn" id="b6" style="left:1039px;top:779px"><svg width="181" height="46" viewBox="0 0 181 46" style="left:0;top:0"><circle cx="71" cy="23" r="12.5" fill="#f44336"/><path d="M66.35 17.74 A6.95 6.95 0 1 0 75.65 17.74" fill="none" stroke="#ffcdd2" stroke-width="2.3"/><rect x="69.9" y="14.95" width="2.35" height="7.1" fill="#ffcdd2"/></svg><span style="left:87.5px;top:16px">退出</span></div>

  <!-- table -->
  <div class="abs" id="tbl" style="left:30px;top:650px;width:751px;height:171px;background:#f0e7e2;overflow:hidden">
    <div class="abs" style="left:0;top:0;width:751px;height:25px;background:#e4e4e4"></div>
    <div class="th" style="left:0;width:79px">序号</div>
    <div class="th" style="left:80px;width:199px;line-height:30px">文件路径</div>
    <div class="th" style="left:280px;width:79px">目标编号</div>
    <div class="th" style="left:360px;width:149px">类别</div>
    <div class="th" style="left:510px;width:89px">置信度</div>
    <div class="th" style="left:600px;width:151px;text-align:left;padding-left:91px">坐标位置</div>
    <div class="sb" style="left:0;top:154px;width:751px;height:17px">
      <div class="trk" style="left:614px;top:0;width:120px;height:17px"></div>
      <i style="left:1px;top:1px;width:16px;height:16px"></i>
      <i style="left:18px;top:1px;width:596px;height:16px"></i>
      <i style="left:735px;top:1px;width:16px;height:16px"></i>
      <b style="left:6px;top:7px;width:1px;height:1px"></b><b style="left:7px;top:6px;width:1px;height:3px"></b><b style="left:8px;top:5px;width:1px;height:5px"></b><b style="left:9px;top:4px;width:1px;height:7px"></b><b style="left:740px;top:4px;width:1px;height:7px"></b><b style="left:741px;top:5px;width:1px;height:5px"></b><b style="left:742px;top:6px;width:1px;height:3px"></b><b style="left:743px;top:7px;width:1px;height:1px"></b>
      <u style="left:0;top:16px;width:614px"></u><u style="left:734px;top:16px;width:17px"></u><u style="left:16px;top:0"></u><u style="left:613px;top:0"></u><u style="left:750px;top:0"></u>
    </div>
  </div>
</div>
</body>
</html>
